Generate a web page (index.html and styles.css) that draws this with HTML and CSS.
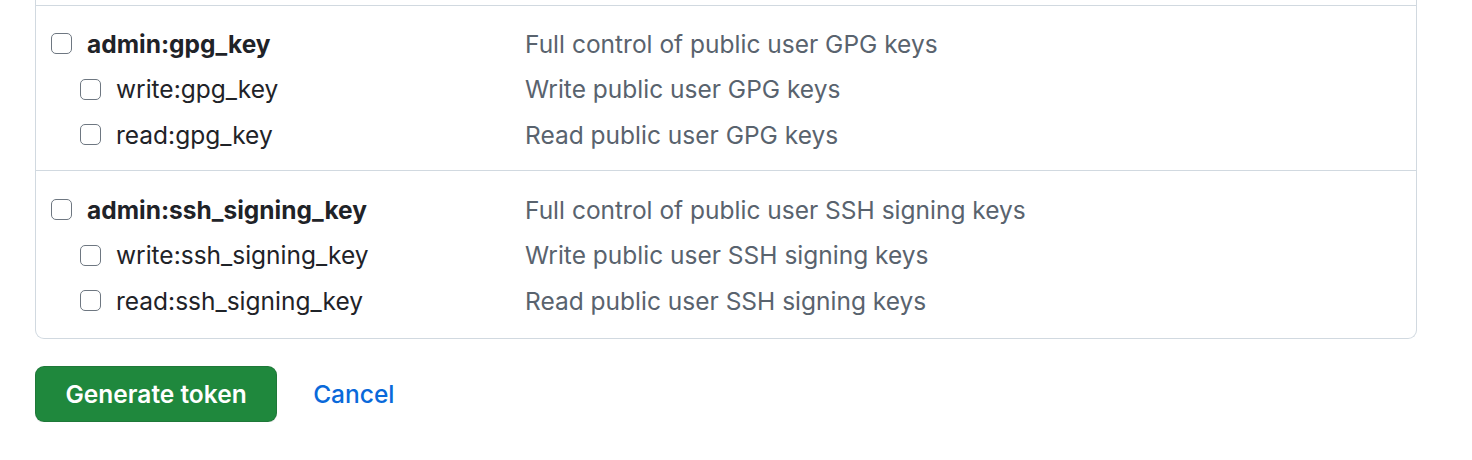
FILE: index.html
```html
<!DOCTYPE html>
<html>
<head>
<meta charset="utf-8">
<link rel="stylesheet" href="styles.css">
</head>
<body>
<div class="page">
  <div class="scopes">
    <div class="tail"></div>
    <div class="group">
      <div class="row">
        <label class="name top"><input type="checkbox" class="cb"><span class="strong">admin:gpg_key</span></label>
        <span class="desc">Full control of public user GPG keys</span>
      </div>
      <div class="row">
        <label class="name sub"><input type="checkbox" class="cb"><span>write:gpg_key</span></label>
        <span class="desc">Write public user GPG keys</span>
      </div>
      <div class="row">
        <label class="name sub"><input type="checkbox" class="cb"><span>read:gpg_key</span></label>
        <span class="desc">Read public user GPG keys</span>
      </div>
    </div>
    <div class="group">
      <div class="row">
        <label class="name top"><input type="checkbox" class="cb"><span class="strong">admin:ssh_signing_key</span></label>
        <span class="desc">Full control of public user SSH signing keys</span>
      </div>
      <div class="row">
        <label class="name sub"><input type="checkbox" class="cb"><span>write:ssh_signing_key</span></label>
        <span class="desc">Write public user SSH signing keys</span>
      </div>
      <div class="row">
        <label class="name sub"><input type="checkbox" class="cb"><span>read:ssh_signing_key</span></label>
        <span class="desc">Read public user SSH signing keys</span>
      </div>
    </div>
  </div>
  <div class="actions">
    <button class="btn-primary" type="button">Generate token</button>
    <a class="btn-link" href="#">Cancel</a>
  </div>
</div>
</body>
</html>
```
FILE: styles.css
```css
html, body {
  margin: 0;
  padding: 0;
  background: #ffffff;
}
body {
  font-family: Inter, "Liberation Sans", sans-serif;
  color: #1f2328;
  font-size: 24.5px;
}
.page {
  padding-left: 35px;
  width: 1382px;
}
.scopes {
  border: 1px solid #d1d9e0;
  border-top: none;
  border-radius: 0 0 9px 9px;
}
.tail {
  height: 5px;
}
.group {
  border-top: 1px solid #d1d9e0;
  padding: 15px 0 12px 15px;
}
.group + .group {
  padding-top: 16px;
  padding-bottom: 14px;
}
.row {
  display: flex;
  align-items: center;
  height: 45.6px;
}
.name {
  display: flex;
  align-items: center;
  width: 474px;
  flex: none;
}
.name.sub {
  padding-left: 29px;
  width: 445px;
}
.strong {
  font-weight: 700;
}
.desc {
  color: #59636e;
}
.cb {
  appearance: none;
  -webkit-appearance: none;
  margin: 0 15px 0 0;
  width: 21px;
  height: 21px;
  border: 1.5px solid #6e7781;
  border-radius: 5px;
  background: #fff;
  box-sizing: border-box;
  flex: none;
}
.actions {
  display: flex;
  align-items: center;
  margin-top: 27px;
  gap: 36px;
}
.btn-primary {
  font-family: inherit;
  font-size: 24.5px;
  font-weight: 600;
  color: #ffffff;
  background: #1f883d;
  border: 1px solid rgba(31, 35, 40, 0.15);
  border-radius: 9px;
  height: 56px;
  padding: 0 29.5px;
  box-shadow: 0 1px 0 rgba(31, 35, 40, 0.1);
}
.btn-link {
  font-size: 24.5px;
  font-weight: 500;
  color: #0969da;
  text-decoration: none;
}
```
